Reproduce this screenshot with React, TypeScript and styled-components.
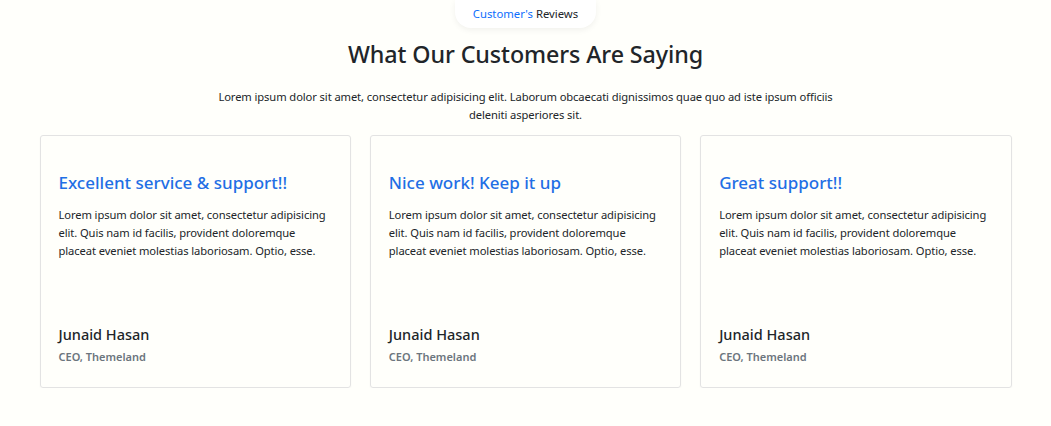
import React from "react";
import styled, { createGlobalStyle } from "styled-components";

const GlobalStyle = createGlobalStyle`
	* {
		box-sizing: border-box;
	}
	body {
		margin: 0;
		background: #fffffb;
		font-family: "Noto Sans", "Open Sans", sans-serif;
		color: #212529;
	}
`;

const reviews = [
	{ title: "Excellent service & support!!" },
	{ title: "Nice work! Keep it up" },
	{ title: "Great support!!" },
];

const App = () => {
	return (
		<>
			<GlobalStyle />
			<Section>
				<Badge>
					<span>Customer's</span> Reviews
				</Badge>
				<Heading>What Our Customers Are Saying</Heading>
				<Lead>
					Lorem ipsum dolor sit amet, consectetur adipisicing elit. Laborum
					obcaecati dignissimos quae quo ad iste ipsum officiis deleniti
					asperiores sit.
				</Lead>
				<Grid>
					{reviews.map((r) => (
						<Card key={r.title}>
							<CardTitle>{r.title}</CardTitle>
							<CardText>
								Lorem ipsum dolor sit amet, consectetur adipisicing elit. Quis
								nam id facilis, provident doloremque placeat eveniet molestias
								laboriosam. Optio, esse.
							</CardText>
							<Author>
								<Name>Junaid Hasan</Name>
								<Role>CEO, Themeland</Role>
							</Author>
						</Card>
					))}
				</Grid>
			</Section>
		</>
	);
};

const Section = styled.section`
	display: flex;
	flex-direction: column;
	align-items: center;
	padding: 0 38px;
`;

const Badge = styled.div`
	background: #fff;
	border-radius: 0 0 16px 16px;
	box-shadow: 0 2px 6px rgba(0, 0, 0, 0.06);
	padding: 6px 18px 7px;
	font-size: 11.3px;
	color: #212529;
	span {
		color: #0d6efd;
	}
`;

const Heading = styled.h2`
	margin: 13px 0 0;
	font-size: 23.3px;
	font-weight: 500;
	line-height: 1.2;
	letter-spacing: -0.1px;
	color: #212529;
`;

const Lead = styled.p`
	margin: 19px 0 0;
	max-width: 640px;
	text-align: center;
	font-size: 11.2px;
	letter-spacing: -0.1px;
	line-height: 18px;
`;

const Grid = styled.div`
	margin-top: 11px;
	width: 972px;
	display: grid;
	grid-template-columns: repeat(3, 1fr);
	gap: 19px;
`;

const Card = styled.div`
	height: 253px;
	border: 1px solid #e3e3e3;
	border-radius: 3px;
	box-shadow: 0 1px 2px rgba(0, 0, 0, 0.04);
	padding: 35px 18px 23px;
	display: flex;
	flex-direction: column;
`;

const CardTitle = styled.h3`
	margin: 0;
	font-size: 17px;
	font-weight: 500;
	line-height: 24px;
	color: #1f6fe5;
`;

const CardText = styled.p`
	margin: 11px 0 0;
	font-size: 11.2px;
	letter-spacing: -0.1px;
	line-height: 18px;
`;

const Author = styled.div`
	margin-top: auto;
`;

const Name = styled.div`
	font-size: 14.5px;
	font-weight: 500;
	line-height: 20px;
`;

const Role = styled.div`
	margin-top: 5px;
	font-size: 11px;
	font-weight: 600;
	color: #6c757d;
`;

export default App;
